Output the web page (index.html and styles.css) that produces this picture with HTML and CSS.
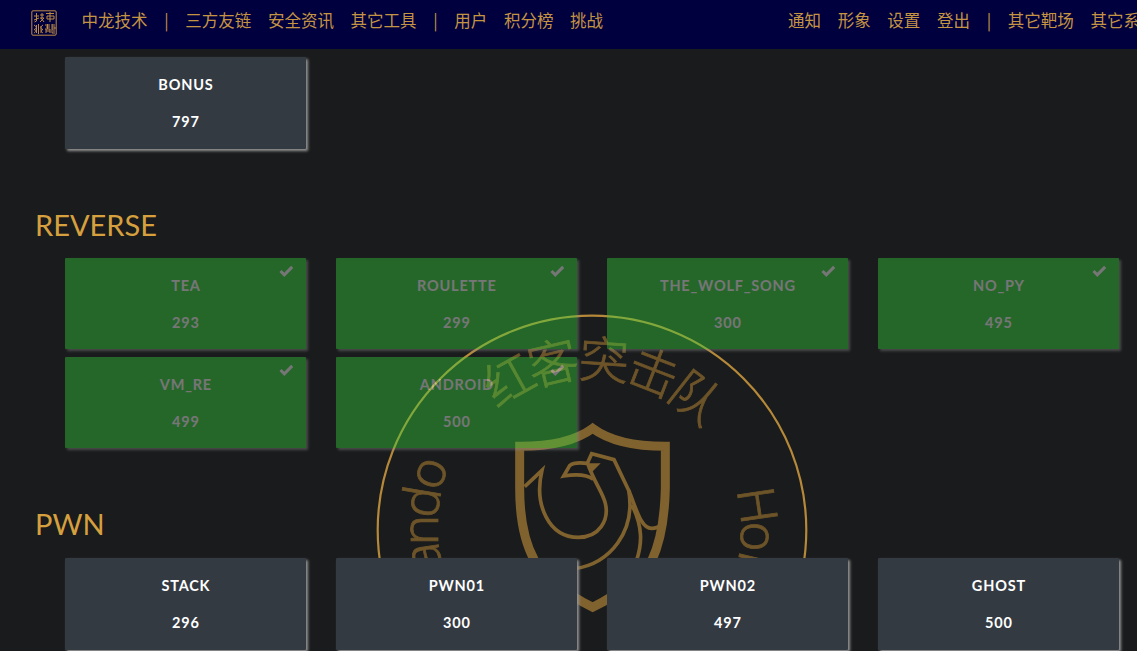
FILE: index.html
```html
<!DOCTYPE html>
<html lang="zh-CN">
<head>
<meta charset="utf-8">
<title>挑战</title>
<link rel="stylesheet" href="styles.css">
</head>
<body>
<header class="navbar">
  <svg class="logo" viewBox="0 0 26 26">
    <rect x="0.8" y="0.8" width="24.4" height="24.4" rx="1.2"/>
    <path d="M3 6h5M5.500 3v8l-2 1M3 10l5-2M9 5h4M11 3v5M9 8h4l-4 4M10 8l3 4M15 3.500h8M16 9h7V6h-7zM19 2v10"/>
    <path d="M7.500 14v10M3 15c3 2 3 3 0 5M3 19c2 1 2 3 0 4M5.500 15v8M12 15c-3 2-3 3 0 5M12 19c-2 1-2 3 0 4M10 16v7"/>
    <path d="M14 15h5M15 17h4M14 19h5v4M15 19v4M15 21h4M21 14v9h3M21 15h3M21 17h3v2h-3M22 21h2M16.500 14v5"/>
  </svg>
  <nav class="links"><a>中龙技术</a><a>|</a><a>三方友链</a><a>安全资讯</a><a>其它工具</a><a>|</a><a>用户</a><a>积分榜</a><a>挑战</a></nav>
  <nav class="links links-right"><a>通知</a><a>形象</a><a>设置</a><a>登出</a><a>|</a><a>其它靶场</a><a>其它系</a></nav>
</header>
<svg class="emblem" viewBox="0 0 434 336">
  <circle class="ring" cx="217" cy="217" r="214.300"/>
  <g transform="translate(217 217)">
    <g class="team">
      <text transform="rotate(-29) translate(0 -153)">红</text>
      <text transform="rotate(-13.200) translate(0 -153)">客</text>
      <text transform="rotate(4) translate(0 -152)">突</text>
      <text transform="rotate(21.200) translate(0 -151)">击</text>
      <text transform="rotate(38) translate(0 -150)">队</text>
    </g>
    <g class="latin">
      <text transform="rotate(-99) translate(0 -154)">a</text>
      <text transform="rotate(-90) translate(0 -154)">n</text>
      <text transform="rotate(-80.500) translate(0 -155)">d</text>
      <text transform="rotate(-70.700) translate(0 -156.500)">o</text>
      <text transform="rotate(81.500) translate(0 -149)">H</text>
      <text transform="rotate(92.300) translate(0 -149)">o</text>
      <text transform="rotate(103.300) translate(0 -149)">n</text>
    </g>
  </g>
  <g class="crest" transform="translate(125 97) scale(0.33333)">
    <path class="shield" d="M278 55Q205 109 59 109V235Q59 370 103 450Q160 533 278 592Q396 533 456 450Q493 370 496 235V109Q351 109 278 55Z"/>
    <path d="M74 230L126 181C101 285 147 382 235 382C298 382 328 330 316 280C308 246 283 218 262 158"/>
    <path d="M280 208C260 193 230 192 191 198L209 167Q222 155 262 160L275 131L342 149L388 245C410 300 423 355 455 355Q472 355 482 345"/>
    <path d="M386 240C408 365 330 460 225 476M396 285C428 350 427 400 410 450"/>
    <path class="eye" d="M264 160H302L276 186Z"/>
  </g>
</svg>
<main class="board">
  <section class="cards bonus">
    <button class="card"><span>BONUS</span><span>797</span></button>
  </section>
  <h3>REVERSE</h3>
  <section class="cards reverse">
    <button class="card solved"><svg class="check" viewBox="0 0 15 12"><path d="M1.500 6L5.300 9.800L13.200 1.900"/></svg><span>TEA</span><span>293</span></button>
    <button class="card solved"><svg class="check" viewBox="0 0 15 12"><path d="M1.500 6L5.300 9.800L13.200 1.900"/></svg><span>ROULETTE</span><span>299</span></button>
    <button class="card solved"><svg class="check" viewBox="0 0 15 12"><path d="M1.500 6L5.300 9.800L13.200 1.900"/></svg><span>THE_WOLF_SONG</span><span>300</span></button>
    <button class="card solved"><svg class="check" viewBox="0 0 15 12"><path d="M1.500 6L5.300 9.800L13.200 1.900"/></svg><span>NO_PY</span><span>495</span></button>
    <button class="card solved"><svg class="check" viewBox="0 0 15 12"><path d="M1.500 6L5.300 9.800L13.200 1.900"/></svg><span>VM_RE</span><span>499</span></button>
    <button class="card solved"><svg class="check" viewBox="0 0 15 12"><path d="M1.500 6L5.300 9.800L13.200 1.900"/></svg><span>ANDROID</span><span>500</span></button>
  </section>
  <h3>PWN</h3>
  <section class="cards pwn">
    <button class="card"><span>STACK</span><span>296</span></button>
    <button class="card"><span>PWN01</span><span>300</span></button>
    <button class="card"><span>PWN02</span><span>497</span></button>
    <button class="card"><span>GHOST</span><span>500</span></button>
  </section>
</main>
</body>
</html>
```
FILE: styles.css
```css
* { box-sizing: border-box; }
body {
  margin: 0;
  height: 651px;
  overflow: hidden;
  background: #1a1b1c;
  font-family: Lato, "Noto Sans CJK SC", sans-serif;
}
.navbar {
  display: flex;
  align-items: center;
  height: 49px;
  padding: 0 0 10px 31px;
  background: #00003e;
  overflow: hidden;
}
.logo {
  flex: none;
  width: 26px;
  height: 26px;
  margin: 7px 24.500px 0 0;
  fill: none;
  stroke: #bd8b45;
  stroke-width: 1;
}
.links {
  display: flex;
  flex: none;
  gap: 16.65px;
  color: #c59443;
  font: 400 16.5px/24px "Noto Sans CJK SC", sans-serif;
  white-space: nowrap;
}
.links-right { margin-left: 185px; }
.emblem {
  position: absolute;
  left: 375px;
  top: 313px;
  width: 434px;
  height: 336px;
}
.ring { fill: none; stroke: #b58939; stroke-width: 2.2; }
.team, .latin {
  fill: #6d5429;
  stroke: #6d5429;
  stroke-width: 0.8;
  text-anchor: middle;
}
.team { font: 300 50px "Noto Sans CJK SC", sans-serif; }
.latin { font: 300 51px "Noto Sans", "Open Sans", sans-serif; }
.crest { fill: none; stroke: #80622f; stroke-width: 11; }
.crest .shield { stroke-width: 27; }
.crest .eye { fill: #80622f; stroke: none; }
.board {
  position: relative;
  height: 602px;
  padding: 8px 17px 0 35px;
  overflow: hidden;
}
h3 {
  margin: 0;
  color: #d6a03f;
  font-size: 29px;
  font-weight: 400;
  line-height: 36px;
}
.cards {
  display: grid;
  grid-template-columns: repeat(4, 241px);
  grid-auto-rows: 92px;
  column-gap: 30px;
  row-gap: 8px;
  margin: 15px 0 0 30.400px;
}
.bonus { margin-top: 0; margin-bottom: 58px; }
.reverse { grid-auto-rows: 91px; margin-bottom: 58px; }
.pwn { margin-top: 16px; }
.card {
  position: relative;
  display: flex;
  flex-direction: column;
  align-items: center;
  gap: 15px;
  padding: 17px 0 0;
  border: 0;
  border-radius: 1px;
  background: #343a42;
  box-shadow: 2px 2px 3px #959595;
  color: #fff;
  font: 700 14.5px/22px Lato, sans-serif;
  letter-spacing: 0.8px;
}
.solved {
  background: #37d63e;
  opacity: 0.4;
}
.check {
  position: absolute;
  right: 12px;
  top: 7px;
  width: 15px;
  height: 12px;
  fill: none;
  stroke: #fff;
  stroke-width: 3;
}
```
